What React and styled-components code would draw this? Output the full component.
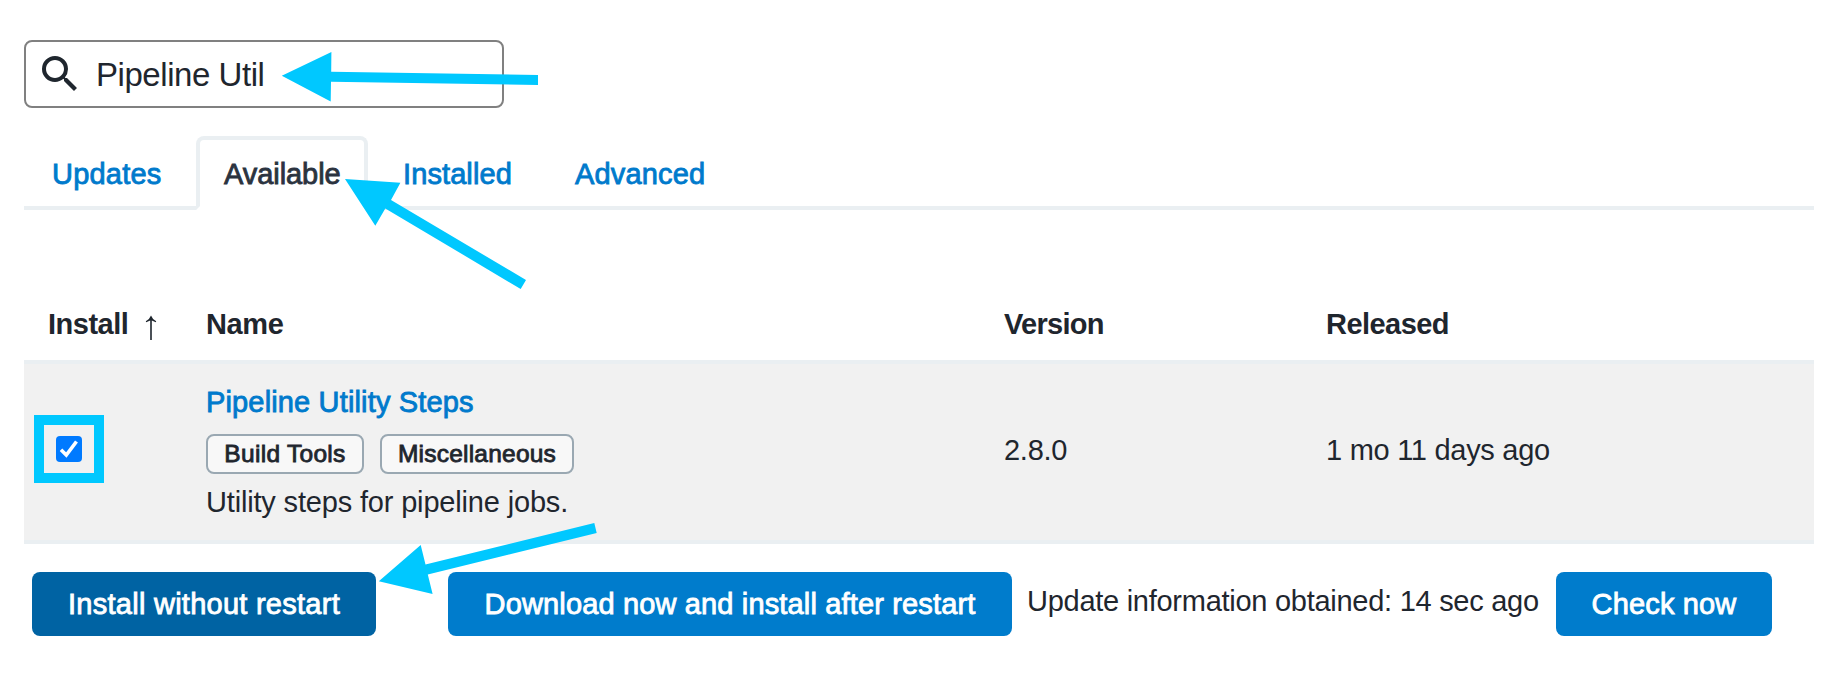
import React from "react";
import styled, { createGlobalStyle, css } from "styled-components";

const GlobalStyle = createGlobalStyle`
  *, *::before, *::after { box-sizing: border-box; }
  body {
    margin: 0;
    background: #fff;
    color: #1f262e;
    font-family: "Liberation Sans", Arial, Helvetica, sans-serif;
    font-size: 29px;
    line-height: 40px;
  }
`;

const medium = css`
  -webkit-text-stroke: 0.85px currentColor;
`;

const Page = styled.main`
  position: relative;
  width: 1836px;
  height: 674px;
  padding: 40px 22px 0 24px;
  overflow: hidden;
`;

const SearchBox = styled.label`
  display: flex;
  align-items: center;
  width: 480px;
  height: 68px;
  padding: 0 10px;
  border: 2px solid #808080;
  border-radius: 8px;
`;

const SearchIcon = styled.svg`
  flex: none;
  width: 48px;
  height: 48px;
  fill: #1f262e;
`;

const SearchText = styled.span`
  margin-left: 12px;
  padding-top: 2px;
  font-size: 33px;
  letter-spacing: -0.45px;
  white-space: pre;
`;

const TabBar = styled.nav`
  display: flex;
  align-items: flex-end;
  height: 74px;
  margin-top: 28px;
  border-bottom: 4px solid #eaeff2;
`;

const Tab = styled.a`
  ${medium}
  display: flex;
  align-items: center;
  width: ${(p) => p.$width}px;
  height: 74px;
  margin: 0 ${(p) => p.$after || 0}px -4px 0;
  padding: 2px 0 0 24px;
  border: 4px solid ${(p) => (p.$active ? "#eaeff2" : "transparent")};
  border-bottom-color: ${(p) => (p.$active ? "#fff" : "transparent")};
  border-radius: 8px 8px 0 0;
  color: ${(p) => (p.$active ? "#2b333f" : "#007acc")};
  letter-spacing: ${(p) => p.$track || 0}px;
  white-space: nowrap;
`;

const Table = styled.section`
  margin-top: 80px;
  width: 1790px;
`;

const Row = styled.div`
  display: grid;
  grid-template-columns: 182px 798px 322px 1fr;
  align-items: center;
  border-bottom: 4px solid #eaeff2;
`;

const HeadRow = styled(Row)`
  height: 74px;
  padding-bottom: 2px;
  font-weight: 700;
`;

const BodyRow = styled(Row)`
  height: 180px;
  background: #f1f1f1;
`;

const HeadCell = styled.div`
  display: flex;
  align-items: center;
  padding-left: ${(p) => p.$inset || 0}px;
  letter-spacing: ${(p) => p.$track || 0}px;
`;

const SortArrow = styled.svg`
  width: 12px;
  height: 26px;
  margin: 6px 0 0 17px;
  fill: #1f262e;
`;

const CheckCell = styled.div`
  padding: 0 0 6px 10px;
`;

const CheckHighlight = styled.div`
  display: flex;
  align-items: center;
  width: 70px;
  height: 68px;
  padding-left: 12px;
  border: 10px solid #00c8ff;
`;

const Checkbox = styled.svg`
  width: 26px;
  height: 26px;
`;

const NameCell = styled.div`
  display: flex;
  flex-direction: column;
`;

const PluginLink = styled.a`
  ${medium}
  color: #007acc;
  letter-spacing: 0.15px;
`;

const Badges = styled.div`
  display: flex;
  gap: 16px;
  margin: 12px 0 8px;
`;

const Badge = styled.span`
  ${medium}
  display: flex;
  align-items: center;
  justify-content: center;
  width: ${(p) => p.$width}px;
  height: 40px;
  border: 2px solid #9aa8b2;
  border-radius: 8px;
  background: #f8f8f8;
  font-size: 24.5px;
  letter-spacing: ${(p) => p.$track || 0}px;
`;

const Description = styled.div`
  letter-spacing: -0.17px;
`;

const ValueCell = styled.div`
  padding-bottom: 4px;
  letter-spacing: -0.28px;
`;

const Actions = styled.footer`
  display: flex;
  align-items: center;
  padding: 28px 0 0 8px;
`;

const Button = styled.button`
  ${medium}
  width: ${(p) => p.$width}px;
  height: 64px;
  margin-right: ${(p) => p.$after || 0}px;
  padding: 0;
  border: 0;
  border-radius: 8px;
  background: ${(p) => (p.$dark ? "#0063a3" : "#007ccc")};
  color: #fff;
  font: inherit;
  letter-spacing: ${(p) => p.$track || 0}px;
  white-space: nowrap;
`;

const Status = styled.span`
  width: 529px;
  padding-bottom: 6px;
  letter-spacing: -0.27px;
  white-space: nowrap;
`;

const Arrows = styled.svg`
  position: absolute;
  inset: 0;
  fill: #00c8ff;
  pointer-events: none;
`;

export default function App() {
  return (
    <Page>
      <GlobalStyle />
      <SearchBox>
        <SearchIcon viewBox="0 0 24 24">
          <path d="M15.5 14h-.79l-.28-.27A6.471 6.471 0 0 0 16 9.5 6.5 6.5 0 1 0 9.5 16c1.61 0 3.09-.59 4.23-1.57l.27.28v.79l5 4.99L20.49 19l-4.99-5zm-6 0C7.01 14 5 11.99 5 9.5S7.01 5 9.5 5 14 7.01 14 9.5 11.99 14 9.5 14z" />
        </SearchIcon>
        <SearchText>Pipeline Util</SearchText>
      </SearchBox>

      <TabBar>
        <Tab $width={166} $after={6} $track={0.2}>Updates</Tab>
        <Tab $width={172} $after={7} $track={-0.06} $active>Available</Tab>
        <Tab $width={166} $after={6} $track={0.1}>Installed</Tab>
        <Tab $width={180} $track={0.15}>Advanced</Tab>
      </TabBar>

      <Table>
        <HeadRow>
          <HeadCell $inset={24} $track={-0.5}>
            Install
            <SortArrow viewBox="0 0 12 26">
              <path d="M6 1.500Q7.500 5.500 11.200 7.200L10.800 8.200L6.800 6.400V26H5.200V6.400L1.200 8.200L0.800 7.200Q4.500 5.500 6 1.500Z" />
            </SortArrow>
          </HeadCell>
          <HeadCell $track={-0.35}>Name</HeadCell>
          <HeadCell $track={-0.7}>Version</HeadCell>
          <HeadCell $track={-0.55}>Released</HeadCell>
        </HeadRow>
        <BodyRow>
          <CheckCell>
            <CheckHighlight>
              <Checkbox viewBox="0 0 26 26">
                <rect width="26" height="26" rx="4" fill="#007aff" />
                <path d="M5 13.800L10.300 19L20.500 5.500" fill="none" stroke="#fff" strokeWidth="3.600" />
              </Checkbox>
            </CheckHighlight>
          </CheckCell>
          <NameCell>
            <PluginLink>Pipeline Utility Steps</PluginLink>
            <Badges>
              <Badge $width={158} $track={0.3}>Build Tools</Badge>
              <Badge $width={194} $track={0.22}>Miscellaneous</Badge>
            </Badges>
            <Description>Utility steps for pipeline jobs.</Description>
          </NameCell>
          <ValueCell>2.8.0</ValueCell>
          <ValueCell>1 mo 11 days ago</ValueCell>
        </BodyRow>
      </Table>

      <Actions>
        <Button $width={344} $after={72} $track={0.26} $dark>Install without restart</Button>
        <Button $width={564} $after={15} $track={0.15}>Download now and install after restart</Button>
        <Status>Update information obtained: 14 sec ago</Status>
        <Button $width={216} $track={0.15}>Check now</Button>
      </Actions>

      <Arrows width="1836" height="674" viewBox="0 0 1836 674">
        <path d="M281.800 75.700L331.400 52L331.200 71.800L538 75V85L331 81.700L330.700 101.500Z" />
        <path d="M345 179L400.400 182.800L391 200L526 280L520.700 289L385.300 208.400L375.300 225.700Z" />
        <path d="M378.800 581.300L420.700 545L425.500 564.500L594.300 523L596.700 533L427.800 574.500L432.600 594Z" />
      </Arrows>
    </Page>
  );
}
